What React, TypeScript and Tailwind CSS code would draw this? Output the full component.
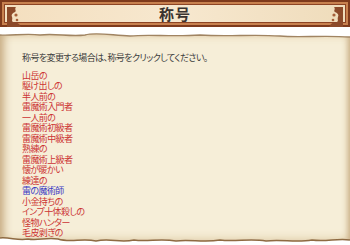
import React from 'react';

const TITLES: { name: string; current?: boolean }[] = [
  { name: '山岳の' },
  { name: '駆け出しの' },
  { name: '半人前の' },
  { name: '雷魔術入門者' },
  { name: '一人前の' },
  { name: '雷魔術初級者' },
  { name: '雷魔術中級者' },
  { name: '熟練の' },
  { name: '雷魔術上級者' },
  { name: '懐が暖かい' },
  { name: '練達の' },
  { name: '雷の魔術師', current: true },
  { name: '小金持ちの' },
  { name: 'インプ十体殺しの' },
  { name: '怪物ハンター' },
  { name: '毛皮剥ぎの' },
];

function Corner({ flip }: { flip?: boolean }) {
  return (
    <svg
      width="14"
      height="20"
      viewBox="0 0 14 20"
      className={flip ? 'absolute right-[2px] top-[2px] -scale-x-100' : 'absolute left-[2px] top-[2px]'}
    >
      <path
        d="M0 0 H9 C7 2 10 4 8 5 C5 6 4 8 5 10 C6 12 4 14 6 15 C8 16 10 15 12 17 C13 18 13 19 14 20 H0 Z"
        fill="#8c4a2a"
      />
      <circle cx="9" cy="8" r="1.6" fill="#a5603a" />
      <circle cx="10" cy="13" r="1.3" fill="#a5603a" />
    </svg>
  );
}

function TitleBar() {
  return (
    <div className="h-[27px] border-[2px] border-[#7e3a1c] bg-[#c8814f] p-[2px]">
      <div className="relative h-full border border-[#8d4424] bg-gradient-to-r from-[#f4dfbf] via-[#f7e8cf] to-[#efdcbb] flex items-center justify-center">
        <Corner />
        <Corner flip />
        <span className="text-[15px] font-bold leading-none text-[#3a3330] tracking-[1px]">称号</span>
      </div>
    </div>
  );
}

function TornEdges() {
  return (
    <svg
      className="absolute inset-0 pointer-events-none"
      width="350"
      height="213"
      viewBox="0 0 350 213"
      preserveAspectRatio="none"
    >
      <path
        d="M0 0 H350 V5 C320 3 300 6 280 4 C250 2 230 5 200 3 C170 5 150 2 130 4 C110 3 95 0 85 3 C70 5 55 1 40 3 C25 1 12 4 0 3 Z"
        fill="#ffffff"
      />
      <path
        d="M0 3 C12 4 25 1 40 3 C55 1 70 5 85 3 C95 0 110 3 130 4 C150 2 170 5 200 3 C230 5 250 2 280 4 C300 6 320 3 350 5"
        fill="none"
        stroke="#a08462"
        strokeWidth="1.4"
      />
      <path
        d="M0 213 V206 C10 205 18 209 28 207 C38 209 46 205 58 207 C70 211 82 206 96 209 C110 206 120 211 134 208 C148 210 160 206 176 209 C190 207 204 211 220 208 C236 210 250 206 266 209 C282 207 296 211 312 208 C326 210 338 206 350 208 V213 Z"
        fill="#ffffff"
      />
      <path
        d="M0 206 C10 205 18 209 28 207 C38 209 46 205 58 207 C70 211 82 206 96 209 C110 206 120 211 134 208 C148 210 160 206 176 209 C190 207 204 211 220 208 C236 210 250 206 266 209 C282 207 296 211 312 208 C326 210 338 206 350 208"
        fill="none"
        stroke="#8e6a42"
        strokeWidth="1.5"
      />
    </svg>
  );
}

export default function App() {
  return (
    <div
      className="w-[350px] h-[245px] bg-white overflow-hidden"
      style={{ fontFamily: '"Noto Sans CJK JP", "Noto Sans", sans-serif' }}
    >
      <TitleBar />
      <div className="relative mt-[5px] h-[213px] bg-[#f6eed8] shadow-[inset_6px_0_8px_-2px_#c8ad84,inset_-4px_0_6px_-2px_#c8ad84,inset_0_-10px_10px_-4px_#e0cca8,inset_0_8px_8px_-4px_#e6d3b0]">
        <TornEdges />
        <div className="relative pl-[22px] pt-[21px] text-[9px] leading-[10.5px] tracking-[-0.6px] [font-feature-settings:'palt']">
          <p className="text-[#3c3c3c]">称号を変更する場合は、称号をクリックしてください。</p>
          <ul className="mt-[7px]">
            {TITLES.map((t) => (
              <li
                key={t.name}
                className={t.current ? 'text-[#3a3ac4] cursor-pointer' : 'text-[#cc3434] cursor-pointer'}
              >
                {t.name}
              </li>
            ))}
          </ul>
        </div>
      </div>
    </div>
  );
}
